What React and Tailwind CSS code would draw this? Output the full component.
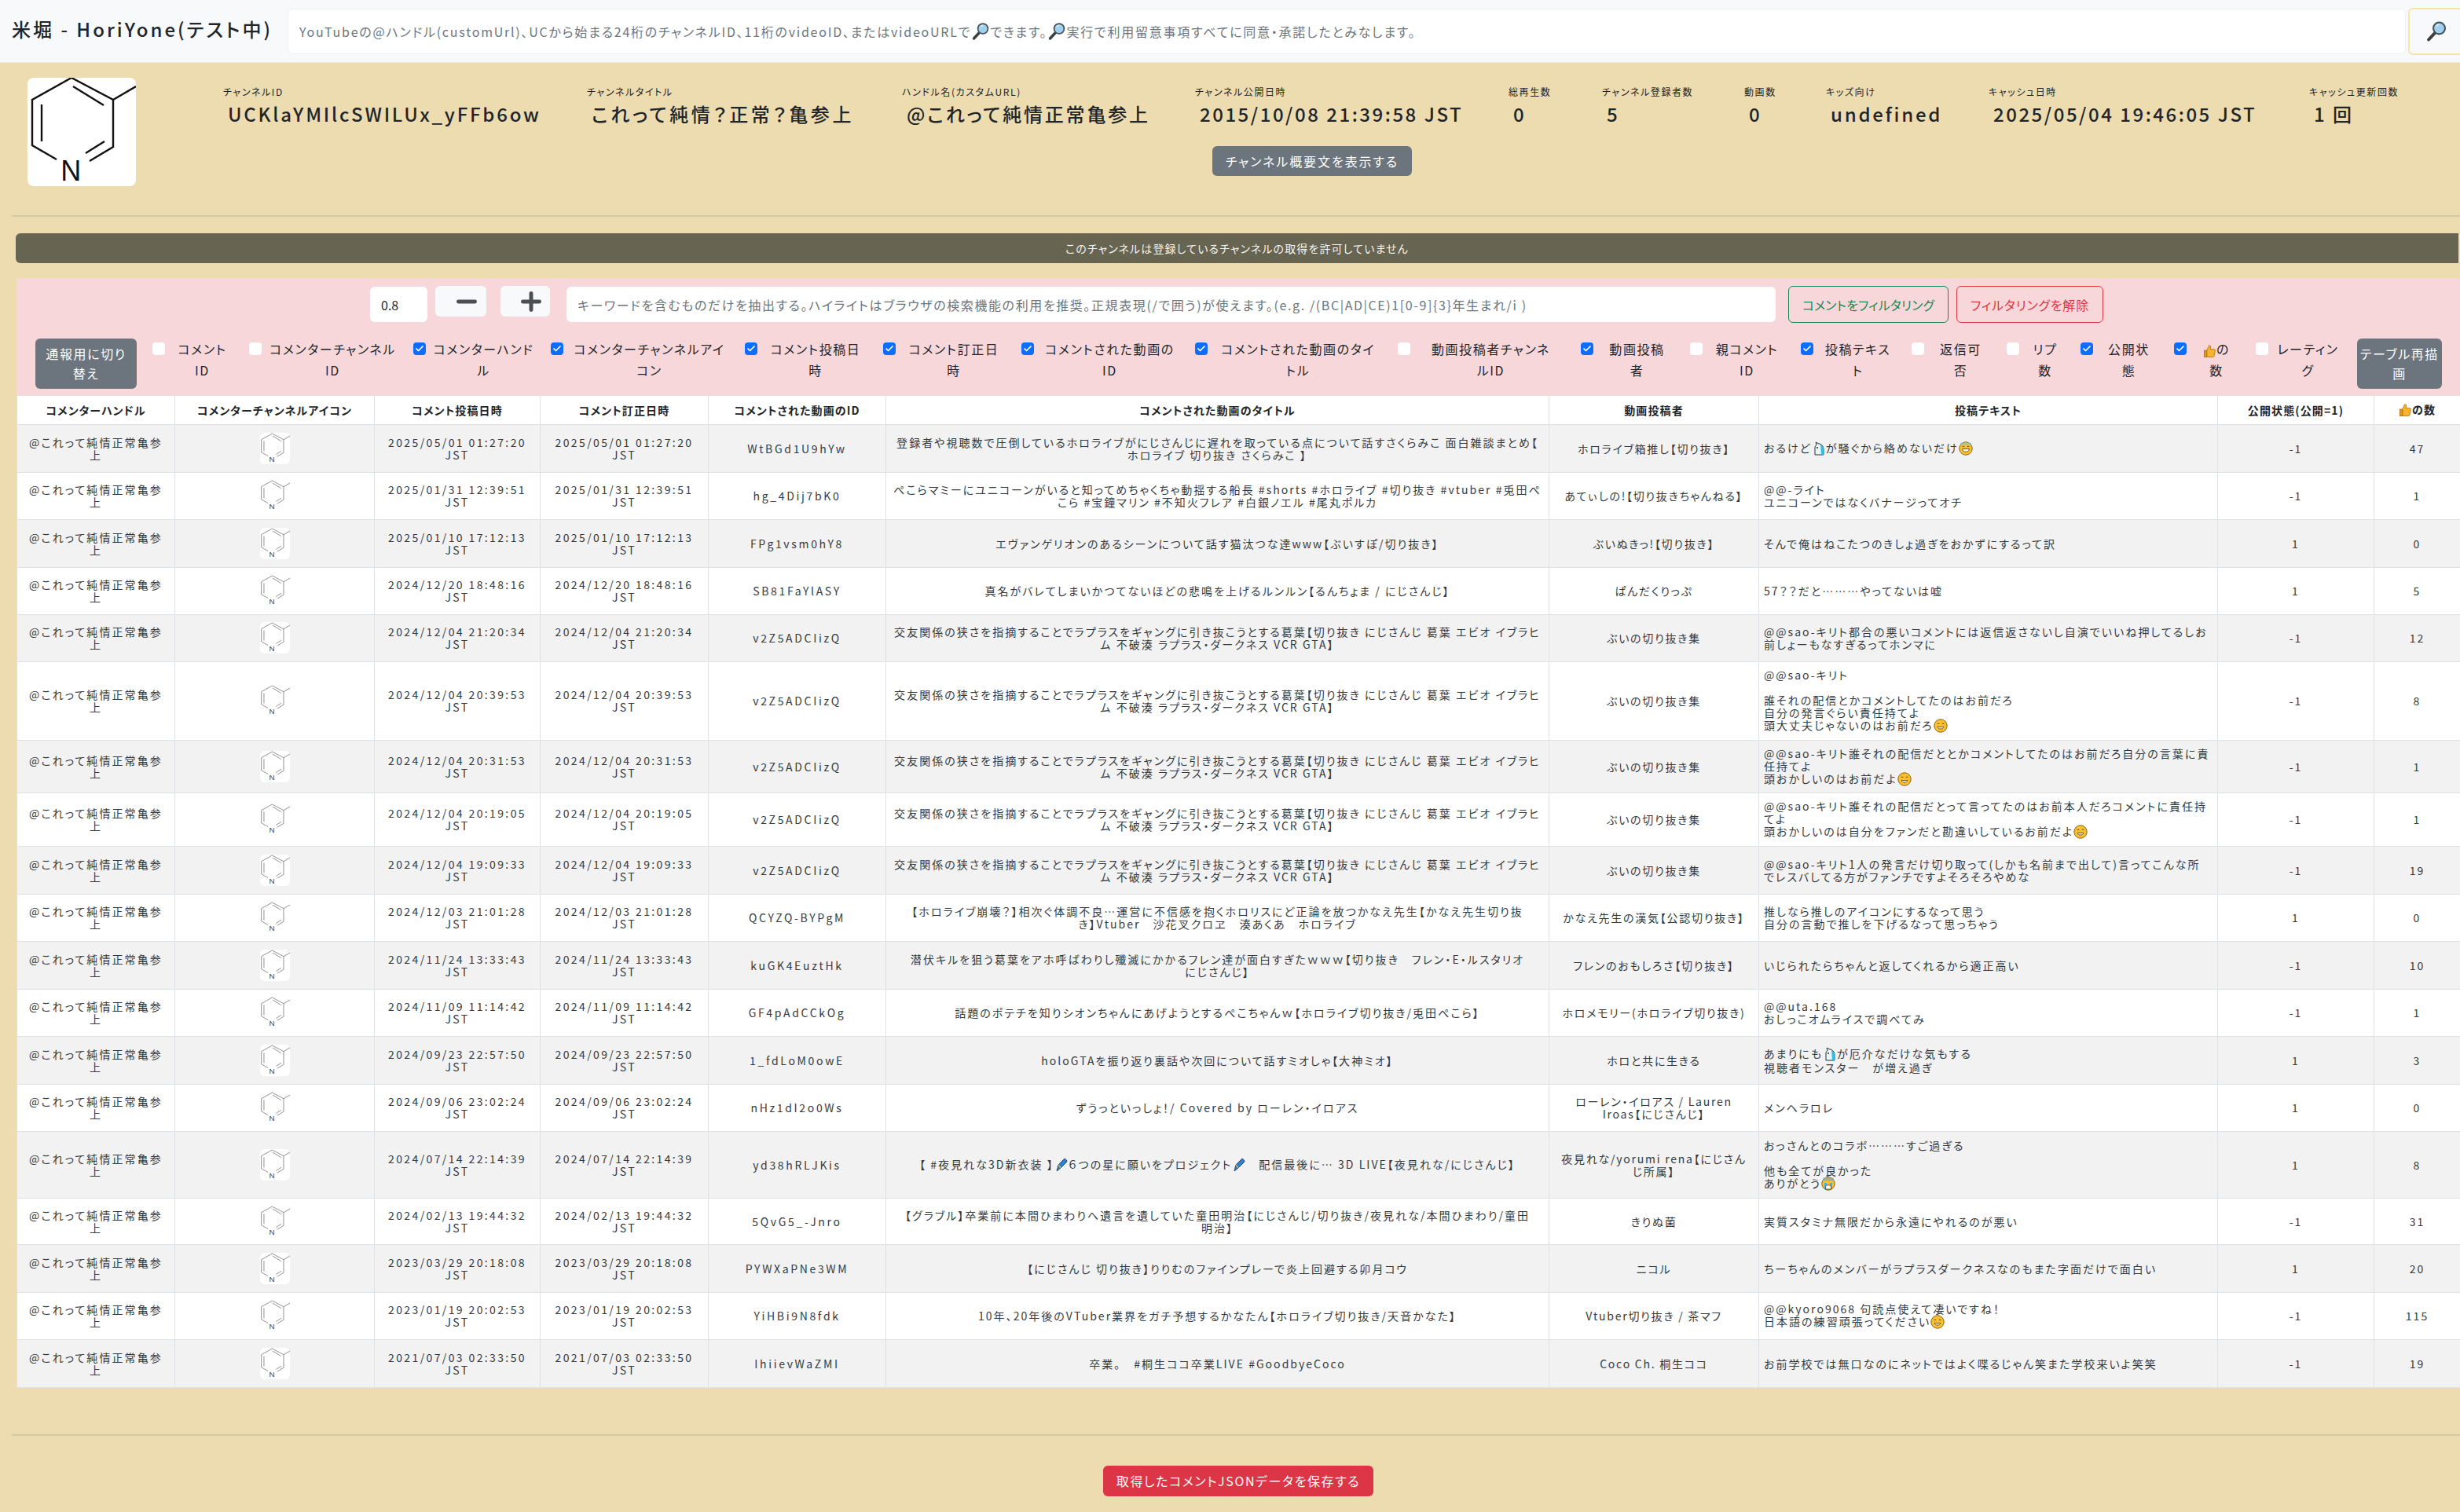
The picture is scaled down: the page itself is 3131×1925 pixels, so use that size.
import { Check, Minus, Plus } from 'lucide-react';

const Molecule = ({ className, stroke = '#111', strokeWidth = 2.4, label = '#111' }) => (
  <svg viewBox="0 0 138 138" className={className} fill="none" stroke={stroke} strokeWidth={strokeWidth}>
    <path d="M56 0 6 28v58l31 18M56 0l53 28v60l-30 18M109 28l29-17M58 11l39 24M18 34v47M74 96l24-15" />
    <text x="56" y="131" textAnchor="middle" fontSize="36" fill={label} stroke="none" fontFamily="Liberation Sans">N</text>
  </svg>
);

const Magnifier = ({ className }) => (
  <svg viewBox="0 0 24 24" className={className}>
    <path d="M10 14 3.500 21" stroke="#3a3f44" strokeWidth="3.4" strokeLinecap="round" />
    <circle cx="15" cy="8.5" r="6.4" fill="#9fd0ee" stroke="#4a5157" strokeWidth="1.8" />
    <path d="M12 6.500a4 4 0 0 1 3-2" stroke="#e6f5fd" strokeWidth="1.3" fill="none" />
  </svg>
);

const ThumbsUp = ({ className = 'inline-block w-[17px] h-[18px] align-text-bottom' }) => (
  <svg viewBox="0 0 18 18" className={className}>
    <path d="M5 8 8 1.500c1.500-.4 2.400.5 2.200 2L9.800 6.500H15c1.200 0 1.600 1 1.300 2l-1.500 7.200c-.2.9-.8 1.300-1.700 1.300H5z" fill="#f7b32b" stroke="#a86a10" strokeWidth=".8" />
    <rect x="1.5" y="8" width="3.5" height="9" fill="#e09a1c" stroke="#a86a10" strokeWidth=".8" />
  </svg>
);

const Face = ({ mouth, children }) => (
  <svg viewBox="0 0 18 18" className="inline-block w-[18px] h-[18px] align-text-bottom">
    <circle cx="9" cy="9" r="8.2" fill="#fbc02d" stroke="#8a6416" strokeWidth="1" />
    {children}
    <path d={mouth} fill="#fff" stroke="#6b4a10" strokeWidth=".9" />
  </svg>
);

const Smile = () => (
  <Face mouth="M5 10.500c1 3.400 7 3.400 8 0z">
    <path d="M4.500 7c.8-1.200 2-1.200 2.800 0M10.700 7c.8-1.200 2-1.200 2.800 0" stroke="#5b3d0c" strokeWidth="1" fill="none" />
  </Face>
);

const Sweat = () => (
  <Face mouth="M4.500 9.500c1 5 8 5 9 0z">
    <path d="M4.500 7c.8-1.200 2-1.200 2.800 0M10.700 7c.8-1.200 2-1.200 2.800 0" stroke="#5b3d0c" strokeWidth="1" fill="none" />
    <path d="M2 1.500h14v3H2z" fill="#7cc4e8" opacity=".55" />
  </Face>
);

const Cry = () => (
  <Face mouth="M5.500 13c.4-3 6.600-3 7 0v3h-7z">
    <path d="M2 1.500h14v4H2z" fill="#6aa7d8" opacity=".6" />
    <path d="M4 8h3v8H4zM11 8h3v8h-3z" fill="#3fb2d9" />
  </Face>
);

const Unicorn = () => (
  <svg viewBox="0 0 18 18" className="inline-block w-[18px] h-[18px] align-text-bottom">
    <path d="M4 17V7l2-3-1-3 4 2c3 0 6 3 6 7v7z" fill="#e8f6fb" stroke="#2b2f33" strokeWidth="1" />
    <path d="M11 4c3 1 4.500 4 4.500 8v5H12z" fill="#37bde0" />
    <circle cx="7" cy="8" r="1" fill="#222" />
  </svg>
);

const Pen = () => (
  <svg viewBox="0 0 18 18" className="inline-block w-[18px] h-[18px] align-text-bottom">
    <path d="M3 17 5 9l8-8c2 1 3 3 3 4l-8 8z" fill="#2f7fd6" stroke="#1f3d66" strokeWidth=".9" />
    <path d="M5 9l3 4" stroke="#d8c13a" strokeWidth="1.300" />
  </svg>
);

const channelInfo = [
  { label: 'チャンネルID', value: 'UCKlaYMIlcSWILUx_yFFb6ow', width: 'w-[463px]', spacing: 'tracking-[0.115em]' },
  { label: 'チャンネルタイトル', value: 'これって純情？正常？亀参上', width: 'w-[401px]', spacing: 'tracking-[0.15em]' },
  { label: 'ハンドル名(カスタムURL)', value: '@これって純情正常亀参上', width: 'w-[373px]', spacing: 'tracking-[0.117em]' },
  { label: 'チャンネル公開日時', value: '2015/10/08 21:39:58 JST', width: 'w-[399px]', spacing: 'tracking-[0.105em]' },
  { label: '総再生数', value: '0', width: 'w-[119px]', spacing: 'tracking-[0.1em]' },
  { label: 'チャンネル登録者数', value: '5', width: 'w-[181px]', spacing: 'tracking-[0.1em]' },
  { label: '動画数', value: '0', width: 'w-[104px]', spacing: 'tracking-[0.1em]' },
  { label: 'キッズ向け', value: 'undefined', width: 'w-[207px]', spacing: 'tracking-[0.115em]' },
  { label: 'キャッシュ日時', value: '2025/05/04 19:46:05 JST', width: 'w-[408px]', spacing: 'tracking-[0.105em]' },
  { label: 'キャッシュ更新回数', value: '1 回', width: 'w-[170px]', spacing: 'tracking-[0.1em]' },
];

const columnToggles = [
  { lines: ['コメント', 'ID'], width: 'w-[123px]', checked: false },
  { lines: ['コメンターチャンネル', 'ID'], width: 'w-[209px]', checked: false },
  { lines: ['コメンターハンド', 'ル'], width: 'w-[175px]', checked: true },
  { lines: ['コメンターチャンネルアイ', 'コン'], width: 'w-[247px]', checked: true },
  { lines: ['コメント投稿日', '時'], width: 'w-[176px]', checked: true },
  { lines: ['コメント訂正日', '時'], width: 'w-[176px]', checked: true },
  { lines: ['コメントされた動画の', 'ID'], width: 'w-[221px]', checked: true },
  { lines: ['コメントされた動画のタイ', 'トル'], width: 'w-[258px]', checked: true },
  { lines: ['動画投稿者チャンネ', 'ルID'], width: 'w-[233px]', checked: false },
  { lines: ['動画投稿', '者'], width: 'w-[139px]', checked: true },
  { lines: ['親コメント', 'ID'], width: 'w-[141px]', checked: false },
  { lines: ['投稿テキス', 'ト'], width: 'w-[141px]', checked: true },
  { lines: ['返信可', '否'], width: 'w-[121px]', checked: false },
  { lines: ['リプ', '数'], width: 'w-[94px]', checked: false },
  { lines: ['公開状', '態'], width: 'w-[119px]', checked: true },
  { lines: [<><ThumbsUp />の</>, '数'], width: 'w-[104px]', checked: true },
  { lines: ['レーティン', 'グ'], width: 'w-[129px]', checked: false },
];

const kuzuhaTitle = '交友関係の狭さを指摘することでラプラスをギャングに引き抜こうとする葛葉【切り抜き にじさんじ 葛葉 エビオ イブラヒム 不破湊 ラプラス・ダークネス VCR GTA】';

const rows = [
  { h: 'h-[61px]', date: '2025/05/01 01:27:20', id: 'WtBGd1U9hYw', title: <>登録者や視聴数で圧倒しているホロライブがにじさんじに遅れを取っている点について話すさくらみこ 面白雑談まとめ【<br />ホロライブ 切り抜き さくらみこ 】</>, owner: 'ホロライブ箱推し【切り抜き】', text: <>おるけど<Unicorn />が騒ぐから絡めないだけ<Sweat /></>, pub: '-1', likes: '47' },
  { h: 'h-[60px]', date: '2025/01/31 12:39:51', id: 'hg_4Dij7bK0', title: 'ぺこらマミーにユニコーンがいると知ってめちゃくちゃ動揺する船長 #shorts #ホロライブ #切り抜き #vtuber #兎田ぺこら #宝鐘マリン #不知火フレア #白銀ノエル #尾丸ポルカ', owner: 'あてぃしの!【切り抜きちゃんねる】', text: '@@-ライト\nユニコーンではなくバナージってオチ', pub: '-1', likes: '1' },
  { h: 'h-[61px]', date: '2025/01/10 17:12:13', id: 'FPg1vsm0hY8', title: 'エヴァンゲリオンのあるシーンについて話す猫汰つな達www【ぶいすぽ/切り抜き】', owner: 'ぶいぬきっ!【切り抜き】', text: 'そんで俺はねこたつのきしょ過ぎをおかずにするって訳', pub: '1', likes: '0' },
  { h: 'h-[60px]', date: '2024/12/20 18:48:16', id: 'SB81FaYlASY', title: '真名がバレてしまいかつてないほどの悲鳴を上げるルンルン【るんちょま / にじさんじ】', owner: 'ぱんだくりっぷ', text: '57？？だと………やってないは嘘', pub: '1', likes: '5' },
  { h: 'h-[60px]', date: '2024/12/04 21:20:34', id: 'v2Z5ADCIizQ', title: kuzuhaTitle, owner: 'ぶいの切り抜き集', text: '@@sao-キリト都合の悪いコメントには返信返さないし自演でいいね押してるしお前しょーもなすぎるってホンマに', pub: '-1', likes: '12' },
  { h: 'h-[100px]', date: '2024/12/04 20:39:53', id: 'v2Z5ADCIizQ', title: kuzuhaTitle, owner: 'ぶいの切り抜き集', text: <>{'@@sao-キリト\n\n誰それの配信とかコメントしてたのはお前だろ\n自分の発言ぐらい責任持てよ\n頭大丈夫じゃないのはお前だろ'}<Smile /></>, pub: '-1', likes: '8' },
  { h: 'h-[67px]', date: '2024/12/04 20:31:53', id: 'v2Z5ADCIizQ', title: kuzuhaTitle, owner: 'ぶいの切り抜き集', text: <>{'@@sao-キリト誰それの配信だととかコメントしてたのはお前だろ自分の言葉に責\n任持てよ\n頭おかしいのはお前だよ'}<Smile /></>, pub: '-1', likes: '1' },
  { h: 'h-[68px]', date: '2024/12/04 20:19:05', id: 'v2Z5ADCIizQ', title: kuzuhaTitle, owner: 'ぶいの切り抜き集', text: <>{'@@sao-キリト誰それの配信だとって言ってたのはお前本人だろコメントに責任持てよ\n頭おかしいのは自分をファンだと勘違いしているお前だよ'}<Smile /></>, pub: '-1', likes: '1' },
  { h: 'h-[61px]', date: '2024/12/04 19:09:33', id: 'v2Z5ADCIizQ', title: kuzuhaTitle, owner: 'ぶいの切り抜き集', text: '@@sao-キリト1人の発言だけ切り取って(しかも名前まで出して)言ってこんな所でレスバしてる方がファンチですよそろそろやめな', pub: '-1', likes: '19' },
  { h: 'h-[60px]', date: '2024/12/03 21:01:28', id: 'QCYZQ-BYPgM', title: <>【ホロライブ崩壊？】相次ぐ体調不良…運営に不信感を抱くホロリスにど正論を放つかなえ先生【かなえ先生切り抜<br />き】Vtuber　沙花叉クロヱ　湊あくあ　ホロライブ</>, owner: 'かなえ先生の漢気【公認切り抜き】', text: '推しなら推しのアイコンにするなって思う\n自分の言動で推しを下げるなって思っちゃう', pub: '1', likes: '0' },
  { h: 'h-[61px]', date: '2024/11/24 13:33:43', id: 'kuGK4EuztHk', title: <>潜伏キルを狙う葛葉をアホ呼ばわりし殲滅にかかるフレン達が面白すぎたｗｗｗ【切り抜き　フレン・E・ルスタリオ<br />にじさんじ】</>, owner: 'フレンのおもしろさ【切り抜き】', text: 'いじられたらちゃんと返してくれるから適正高い', pub: '-1', likes: '10' },
  { h: 'h-[60px]', date: '2024/11/09 11:14:42', id: 'GF4pAdCCkOg', title: '話題のポテチを知りシオンちゃんにあげようとするぺこちゃんｗ【ホロライブ切り抜き/兎田ぺこら】', owner: 'ホロメモリー(ホロライブ切り抜き)', text: '@@uta.168\nおしっこオムライスで調べてみ', pub: '-1', likes: '1' },
  { h: 'h-[61px]', date: '2024/09/23 22:57:50', id: '1_fdLoM0owE', title: 'holoGTAを振り返り裏話や次回について話すミオしゃ【大神ミオ】', owner: 'ホロと共に生きる', text: <>あまりにも<Unicorn />{'が厄介なだけな気もする\n視聴者モンスター　が増え過ぎ'}</>, pub: '1', likes: '3' },
  { h: 'h-[60px]', date: '2024/09/06 23:02:24', id: 'nHz1dI2o0Ws', title: 'ずうっといっしょ！/ Covered by ローレン・イロアス', owner: <>ローレン・イロアス / Lauren<br />Iroas【にじさんじ】</>, text: 'メンヘラロレ', pub: '1', likes: '0' },
  { h: 'h-[85px]', date: '2024/07/14 22:14:39', id: 'yd38hRLJKis', title: <>【 #夜見れな3D新衣装 】<Pen />６つの星に願いをプロジェクト<Pen />　配信最後に… 3D LIVE【夜見れな/にじさんじ】</>, owner: <>夜見れな/yorumi rena【にじさん<br />じ所属】</>, text: <>{'おっさんとのコラボ………すご過ぎる\n\n他も全てが良かった\nありがとう'}<Cry /></>, pub: '1', likes: '8' },
  { h: 'h-[59px]', date: '2024/02/13 19:44:32', id: '5QvG5_-Jnro', title: <>【グラブル】卒業前に本間ひまわりへ遺言を遺していた童田明治【にじさんじ/切り抜き/夜見れな/本間ひまわり/童田<br />明治】</>, owner: 'きりぬ菌', text: '実質スタミナ無限だから永遠にやれるのが悪い', pub: '-1', likes: '31' },
  { h: 'h-[61px]', date: '2023/03/29 20:18:08', id: 'PYWXaPNe3WM', title: '【にじさんじ 切り抜き】りりむのファインプレーで炎上回避する卯月コウ', owner: 'ニコル', text: 'ちーちゃんのメンバーがラプラスダークネスなのもまた字面だけで面白い', pub: '1', likes: '20' },
  { h: 'h-[60px]', date: '2023/01/19 20:02:53', id: 'YiHBi9N8fdk', title: '10年、20年後のVTuber業界をガチ予想するかなたん【ホロライブ切り抜き/天音かなた】', owner: 'Vtuber切り抜き / 茶マフ', text: <>{'@@kyoro9068 句読点使えて凄いですね！\n日本語の練習頑張ってください'}<Smile /></>, pub: '-1', likes: '115' },
  { h: 'h-[61px]', date: '2021/07/03 02:33:50', id: 'IhiievWaZMI', title: '卒業。　#桐生ココ卒業LIVE #GoodbyeCoco', owner: 'Coco Ch. 桐生ココ', text: 'お前学校では無口なのにネットではよく喋るじゃん笑また学校来いよ笑笑', pub: '-1', likes: '19' },
];

const headers = ['コメンターハンドル', 'コメンターチャンネルアイコン', 'コメント投稿日時', 'コメント訂正日時', 'コメントされた動画のID', 'コメントされた動画のタイトル', '動画投稿者', '投稿テキスト', '公開状態(公開=1)', <><ThumbsUp />の数</>];

const cell = 'border border-[#dee2e6] px-2 py-1 text-center align-middle';

const ColumnToggle = ({ lines, width, checked }) => (
  <label className={`flex items-start shrink-0 text-[16px] leading-[27px] ${width}`}>
    <span className={checked
      ? 'mt-[5px] w-4 h-4 shrink-0 rounded bg-[#0d6efd] flex items-center justify-center'
      : 'mt-[5px] w-4 h-4 shrink-0 rounded bg-white'}>
      {checked && <Check size={12} color="white" strokeWidth={3.5} />}
    </span>
    <span className="flex-1 pr-3 text-center whitespace-nowrap">
      {lines[0]}
      <br />
      {lines[1]}
    </span>
  </label>
);

const App = () => {
  return (
    <div className="w-[3131px] min-h-[1925px] overflow-hidden bg-[#ecdcb0] text-[#212529] tracking-[0.1em] [font-feature-settings:'palt'] font-['Noto_Sans_CJK_JP','Noto_Sans',sans-serif]">
      <header className="h-[80px] bg-[#f8f9fa] flex items-center pl-[15px] border-b border-[#f1ece0]">
        <div className="w-[351px] shrink-0 text-[24px] tracking-[0.125em] font-medium whitespace-nowrap -mt-[6px]">米堀 - HoriYone(テスト中)</div>
        <div className="w-[2696px] h-[58px] shrink-0 bg-white rounded-md border border-[#eef0f2] flex items-center px-[14px] text-[16px] tracking-[0.11em] text-[#6c757d] whitespace-nowrap">
          YouTubeの@ハンドル(customUrl)、UCから始まる24桁のチャンネルID、11桁のvideoID、またはvideoURLで
          <Magnifier className="w-6 h-6" />
          できます。
          <Magnifier className="w-6 h-6" />
          実行で利用留意事項すべてに同意・承諾したとみなします。
        </div>
        <button className="ml-[3px] w-[80px] h-[60px] shrink-0 rounded-md border-2 border-[#f5e3a8] bg-[#f8f9fa] flex items-center pl-[20px]">
          <Magnifier className="w-7 h-7" />
        </button>
      </header>

      <section className="h-[196px] ml-[15px] border-b-2 border-[#d5c8a2] pl-[20px] pt-[19px] flex items-start">
        <div className="w-[138px] h-[138px] bg-white rounded-lg overflow-hidden shrink-0">
          <Molecule className="w-full h-full" />
        </div>
        <div className="ml-[111px] w-[2772px] shrink-0 pt-[9px]">
          <div className="flex">
            {channelInfo.map(item => (
              <div key={item.label} className={`shrink-0 whitespace-nowrap ${item.width}`}>
                <div className="text-[12px] leading-[18px]">{item.label}</div>
                <div className={`pl-[6px] mt-[1px] text-[24px] leading-[36px] font-medium ${item.spacing}`}>{item.value}</div>
              </div>
            ))}
          </div>
          <div className="flex justify-center mt-[23px]">
            <button className="w-[254px] h-[38px] rounded-md bg-[#6c757d] text-white text-[16px] tracking-[0.12em] whitespace-nowrap">
              チャンネル概要文を表示する
            </button>
          </div>
        </div>
      </section>

      <div className="mt-[21px] ml-[20px] w-[3109px] h-[38px] rounded-l-md bg-[#676452] text-[#f5f5f0] text-[14px] tracking-[0.08em] flex items-center justify-center">
        このチャンネルは登録しているチャンネルの取得を許可していません
      </div>

      <section className="mt-[19px] ml-[21px] w-[3110px] bg-[#f8d7da]">
        <div className="h-[77px] pt-[10px] flex items-start pl-[450px]">
          <input
            readOnly
            value="0.8"
            className="mt-[1px] w-[73px] h-[45px] rounded-md bg-white px-[14px] text-[16px] tracking-normal"
          />
          <button className="ml-[10px] w-[65px] h-[39px] rounded-md bg-[#f8f9fa] flex items-center justify-center pl-[14px]">
            <Minus size={36} color="#4b4f54" strokeWidth={3.3} />
          </button>
          <button className="ml-[18px] w-[63px] h-[39px] rounded-md bg-[#f8f9fa] flex items-center justify-center pl-[14px]">
            <Plus size={36} color="#4b4f54" strokeWidth={3.3} />
          </button>
          <input
            readOnly
            placeholder="キーワードを含むものだけを抽出する。ハイライトはブラウザの検索機能の利用を推奨。正規表現(/で囲う)が使えます。(e.g. /(BC|AD|CE)1[0-9]{3}年生まれ/i )"
            className="mt-[1px] ml-[21px] w-[1539px] h-[45px] rounded-md bg-white px-[14px] text-[16px] tracking-[0.1em] placeholder:text-[#6c757d]"
          />
          <button className="ml-[16px] w-[204px] h-[47px] rounded-md border border-[#198754] text-[#198754] text-[16px] tracking-[0.01em] whitespace-nowrap">
            コメントをフィルタリング
          </button>
          <button className="ml-[10px] w-[187px] h-[47px] rounded-md border border-[#dc3545] text-[#dc3545] text-[16px] tracking-[0.05em] whitespace-nowrap">
            フィルタリングを解除
          </button>
        </div>
        <div className="h-[73px] flex items-start pl-[24px]">
          <button className="w-[129px] h-[64px] shrink-0 rounded-md bg-[#6c757d] text-white text-[16px] leading-[25px]">
            通報用に切り
            <br />
            替え
          </button>
          <div className="ml-[20px] flex items-start">
            {columnToggles.map(toggle => (
              <ColumnToggle key={toggle.width + toggle.lines[1]} {...toggle} />
            ))}
          </div>
          <button className="w-[108px] h-[64px] shrink-0 rounded-md bg-[#6c757d] text-white text-[16px] leading-[25px]">
            テーブル再描
            <br />
            画
          </button>
        </div>
      </section>

      <table className="ml-[21px] w-[3110px] table-fixed border-collapse text-[14px] leading-4 tracking-[0.145em] text-[#343a40]">
        <colgroup>
          <col className="w-[201px]" />
          <col className="w-[254px]" />
          <col className="w-[211px]" />
          <col className="w-[214px]" />
          <col className="w-[226px]" />
          <col className="w-[844px]" />
          <col className="w-[267px]" />
          <col className="w-[584px]" />
          <col className="w-[199px]" />
          <col className="w-[110px]" />
        </colgroup>
        <thead>
          <tr className="h-[36px] bg-white">
            {headers.map((title, index) => (
              <th key={index} className={`${cell} font-bold tracking-[0.08em] text-[#212529] whitespace-nowrap border-t-0`}>{title}</th>
            ))}
          </tr>
        </thead>
        <tbody>
          {rows.map((row, index) => (
            <tr key={row.date} className={`${row.h} ${index % 2 === 0 ? 'bg-[#f2f2f2]' : 'bg-white'}`}>
              <td className={`${cell} tracking-[0.15em]`}>@これって純情正常亀参上</td>
              <td className={cell}>
                <div className="w-[38px] h-[40px] mx-auto bg-white rounded-md">
                  <Molecule className="w-full h-full" stroke="#8a8a8a" strokeWidth={3.4} label="#444" />
                </div>
              </td>
              <td className={`${cell} tracking-[0.17em]`}>{row.date} JST</td>
              <td className={`${cell} tracking-[0.17em]`}>{row.date} JST</td>
              <td className={`${cell} tracking-[0.19em]`}>{row.id}</td>
              <td className={cell}>{row.title}</td>
              <td className={`${cell} tracking-[0.125em]`}>{row.owner}</td>
              <td className="border border-[#dee2e6] pl-[6px] pr-2 py-1 text-left align-middle whitespace-pre-line">{row.text}</td>
              <td className={cell}>{row.pub}</td>
              <td className={cell}>{row.likes}</td>
            </tr>
          ))}
        </tbody>
      </table>

      <div className="mt-[59px] ml-[15px] h-[2px] bg-[#d5c8a2]" />

      <div className="mt-[38px] pl-[1404px] pb-[19px]">
        <button className="w-[344px] h-[39px] rounded-md bg-[#dc3545] text-white text-[16px] whitespace-nowrap">
          取得したコメントJSONデータを保存する
        </button>
      </div>
    </div>
  );
};

export default App;
